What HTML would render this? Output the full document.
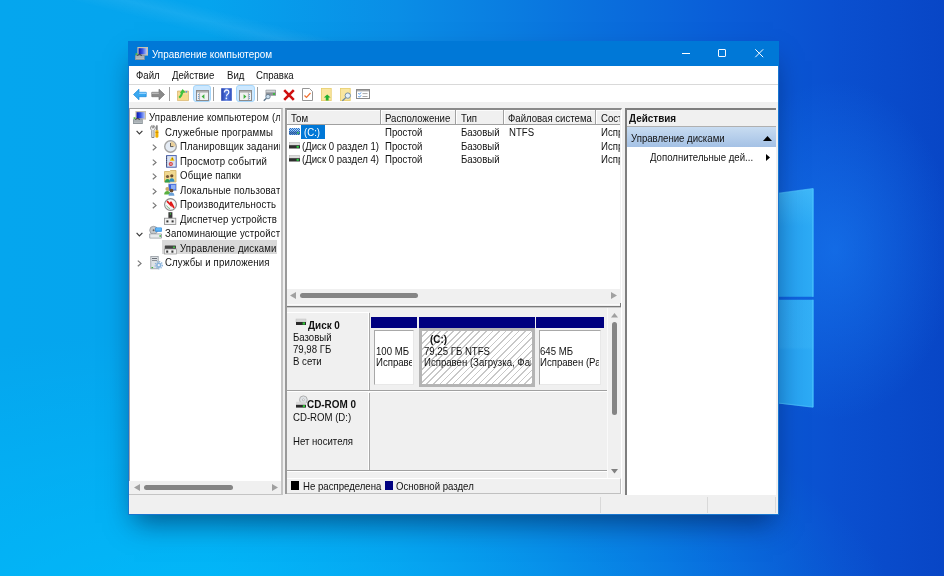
<!DOCTYPE html>
<html><head><meta charset="utf-8">
<style>
*{margin:0;padding:0;box-sizing:border-box}
html,body{width:944px;height:576px;overflow:hidden}
body{position:relative;font-family:"Liberation Sans",sans-serif;font-size:9.5px;line-height:12px;color:#1a1a1a;background:#0a78e2}
.a{position:absolute}
svg.a{overflow:visible}
.t{position:absolute;white-space:nowrap;line-height:12px}
.clip{position:absolute;overflow:hidden}
</style></head><body>

<div class="a" style="left:0;top:0;width:944px;height:576px;background:
 radial-gradient(ellipse 120px 170px at 835px 250px, rgba(30,140,255,.45), rgba(30,140,255,0)),
 radial-gradient(ellipse 680px 300px at 220px 630px, rgba(0,195,255,.7), rgba(0,195,255,0)),
 linear-gradient(90deg,#05a6ee 0%,#05a4ee 22%,#0a8ee6 42%,#0a74de 60%,#0a5ed8 76%,#0a50d0 88%,#0846c6 100%)"></div>
<div class="a" style="left:0;top:0;width:944px;height:576px;background:linear-gradient(194deg,rgba(255,255,255,0) 23.5%,rgba(255,255,255,.07) 25.2%,rgba(255,255,255,0) 27%);-webkit-mask-image:linear-gradient(90deg,#000 0px,#000 330px,transparent 480px)"></div>
<svg class="a" style="left:640px;top:180px;" width="180" height="240" viewBox="0 0 180 240"><defs><linearGradient id="lg1" x1="0" x2="1" y1="0" y2="0"><stop offset="0" stop-color="#1a8ae6"/><stop offset="0.78" stop-color="#229cee"/><stop offset="1" stop-color="#2eacf6"/></linearGradient>
<linearGradient id="lg2" x1="0" x2="0" y1="0" y2="1"><stop offset="0" stop-color="#60d0ff" stop-opacity=".35"/><stop offset=".35" stop-color="#60d0ff" stop-opacity="0"/></linearGradient>
<linearGradient id="lg3" x1="0" x2="0" y1="0" y2="1"><stop offset="0" stop-color="#000" stop-opacity="0"/><stop offset="0" stop-color="#60d0ff" stop-opacity=".12"/><stop offset=".44" stop-color="#60d0ff" stop-opacity=".12"/><stop offset=".47" stop-color="#60d0ff" stop-opacity="0"/><stop offset="1" stop-color="#60d0ff" stop-opacity="0"/></linearGradient></defs>
<polygon points="0,32.4 173.5,8.6 173.5,116.8 0,116.8" fill="url(#lg1)"/>
<polygon points="0,32.4 173.5,8.6 173.5,116.8 0,116.8" fill="url(#lg2)"/>
<polygon points="0,119.8 173.5,119.8 173.5,227.2 0,208.7" fill="url(#lg1)"/>
<polygon points="0,119.8 173.5,119.8 173.5,227.2 0,208.7" fill="url(#lg3)"/>
<path d="M138 13.4L173 8.6" stroke="#4cc0fc" stroke-width="1.2" opacity=".7"/>
<path d="M138 223L173 227.2" stroke="#4cc0fc" stroke-width="1.2" opacity=".7"/>
<rect x="172" y="8.6" width="1.6" height="108.2" fill="#48c0fc" opacity=".7"/>
<rect x="172" y="119.8" width="1.6" height="107.4" fill="#48c0fc" opacity=".7"/></svg>
<div class="a" style="left:128px;top:41px;width:651px;height:474px;background:#f0f0f0;box-shadow:0 14px 26px -6px rgba(0,20,60,.55);border:1px solid #1976cf;border-top:0"></div>
<div class="a" style="left:128px;top:41px;width:651px;height:25px;background:#0078d7;"></div>
<svg class="a" style="left:135px;top:47px;" width="13" height="13" viewBox="0 0 13 13"><defs><linearGradient id="scr0" x1="0" x2="1"><stop offset="0" stop-color="#0a18b0"/><stop offset=".45" stop-color="#3050e0"/><stop offset="1" stop-color="#b0c4ff"/></linearGradient></defs><rect x="2.4" y="0" width="10.6" height="8.6" fill="#cbc2ae"/><rect x="3.6" y="1.2" width="8.2" height="6.2" fill="url(#scr0)"/><rect x="0" y="8.2" width="9.8" height="4.8" fill="#8e979c"/><rect x="0.8" y="9.6" width="8.2" height="0.8" fill="#d4d9dc"/><rect x="0.8" y="11.2" width="8.2" height="0.8" fill="#c0c6ca"/><rect x="0.6" y="6.2" width="1.8" height="1.8" fill="#56c040"/><path d="M2.2 8.4q2.2-2 4.6 0" stroke="#2a2a2a" stroke-width="0.9" fill="none"/></svg>
<div class="t" style="left:152.30px;top:48.50px;font-size:10.39px;color:#fff;transform:scaleX(0.955);transform-origin:0 0;">Управление компьютером</div>
<div class="a" style="left:682px;top:53px;width:8px;height:1px;background:#fff;"></div>
<div class="a" style="left:718px;top:49px;width:8px;height:8px;border:1px solid #f4f8ff;border-radius:1px"></div>
<svg class="a" style="left:755px;top:49px;" width="9" height="9" viewBox="0 0 9 9"><path d="M0.3 0.3L8.2 8.2M8.2 0.3L0.3 8.2" stroke="#fff" stroke-width="1"/></svg>
<div class="a" style="left:129px;top:66px;width:649px;height:18px;background:#fff;"></div>
<div class="a" style="left:129px;top:84px;width:649px;height:1px;background:#d9d9d9;"></div>
<div class="t" style="left:136.30px;top:69.61px;font-size:10.07px;color:#111;transform:scaleX(0.955);transform-origin:0 0;">Файл</div>
<div class="t" style="left:172.30px;top:69.61px;font-size:10.07px;color:#111;transform:scaleX(0.955);transform-origin:0 0;">Действие</div>
<div class="t" style="left:227.30px;top:69.61px;font-size:10.07px;color:#111;transform:scaleX(0.955);transform-origin:0 0;">Вид</div>
<div class="t" style="left:256.30px;top:69.61px;font-size:10.07px;color:#111;transform:scaleX(0.955);transform-origin:0 0;">Справка</div>
<div class="a" style="left:129px;top:85px;width:649px;height:17px;background:#fff;"></div>
<div class="a" style="left:129px;top:108px;width:154px;height:387px;background:#fff;border-top:1px solid #a0a0a0;border-left:1px solid #a8a8a8;border-right:2px solid #c4c4c4;border-bottom:2px solid #c4c4c4"></div>
<div class="clip" style="left:129px;top:109px;width:151px;height:372px">
<div class="a" style="left:33px;top:131px;width:115px;height:14px;background:#d9d9d9;"></div>
<div class="t" style="left:20.30px;top:3.11px;font-size:10.07px;color:#111;transform:scaleX(0.955);transform-origin:0 0;letter-spacing:0.17px">Управление компьютером (локальным)</div>
<svg class="a" style="left:4px;top:1.5px;" width="13" height="13" viewBox="0 0 13 13"><defs><linearGradient id="scr" x1="0" x2="1"><stop offset="0" stop-color="#0a18b0"/><stop offset=".45" stop-color="#3050e0"/><stop offset="1" stop-color="#b0c4ff"/></linearGradient></defs><rect x="2.4" y="0" width="10.6" height="8.6" fill="#cbc2ae"/><rect x="3.6" y="1.2" width="8.2" height="6.2" fill="url(#scr)"/><rect x="0" y="8.2" width="9.8" height="4.8" fill="#8e979c"/><rect x="0.8" y="9.6" width="8.2" height="0.8" fill="#d4d9dc"/><rect x="0.8" y="11.2" width="8.2" height="0.8" fill="#c0c6ca"/><rect x="0.6" y="6.2" width="1.8" height="1.8" fill="#56c040"/><path d="M2.2 8.4q2.2-2 4.6 0" stroke="#2a2a2a" stroke-width="0.9" fill="none"/></svg>
<svg class="a" style="left:7px;top:21.0px;" width="7" height="5" viewBox="0 0 7 5"><path d="M0.6 0.8L3.4 3.8L6.4 0.8" fill="none" stroke="#3a3a3a" stroke-width="1.2"/></svg>
<div class="t" style="left:36.30px;top:17.61px;font-size:10.07px;color:#111;transform:scaleX(0.955);transform-origin:0 0;letter-spacing:0.17px">Служебные программы</div>
<svg class="a" style="left:21px;top:16px;" width="13" height="13" viewBox="0 0 13 13"><path d="M2.2 0.5a2.6 2.6 0 0 0-1 4.2l0.6 0.6v7.2h2.2V5.3l0.6-0.6a2.6 2.6 0 0 0-1-4.2v2.4h-1.4z" fill="#f4f4f4" stroke="#7a7a7a" stroke-width="0.9"/><rect x="6.3" y="0.3" width="1.2" height="5" fill="#555"/><path d="M5.4 5.2h3v6.5q0 1-1.5 1t-1.5-1z" fill="#f0b000"/><path d="M5.4 7.5h3" stroke="#c08000" stroke-width="0.7"/></svg>
<svg class="a" style="left:23.400000000000006px;top:35.30000000000001px;" width="5" height="7" viewBox="0 0 5 7"><path d="M0.8 0.6L4 3.4L0.8 6.2" fill="none" stroke="#7a7a7a" stroke-width="1.2"/></svg>
<div class="t" style="left:51.30px;top:32.11px;font-size:10.07px;color:#111;transform:scaleX(0.955);transform-origin:0 0;letter-spacing:0.17px">Планировщик заданий</div>
<svg class="a" style="left:35px;top:30.5px;" width="13" height="13" viewBox="0 0 13 13"><circle cx="6.5" cy="6.5" r="5.8" fill="#e4ebf4" stroke="#a4a4a4" stroke-width="1.4"/><path d="M6.5 1.4A5.1 5.1 0 0 1 11.6 6.5H6.5z" fill="#ead09a"/><path d="M6.5 3V6.6H9.4" fill="none" stroke="#3a3a3a" stroke-width="0.8"/></svg>
<svg class="a" style="left:23.400000000000006px;top:49.80000000000001px;" width="5" height="7" viewBox="0 0 5 7"><path d="M0.8 0.6L4 3.4L0.8 6.2" fill="none" stroke="#7a7a7a" stroke-width="1.2"/></svg>
<div class="t" style="left:51.30px;top:46.61px;font-size:10.07px;color:#111;transform:scaleX(0.955);transform-origin:0 0;letter-spacing:0.17px">Просмотр событий</div>
<svg class="a" style="left:35.5px;top:45.5px;" width="13" height="13" viewBox="0 0 13 13"><rect x="1.6" y="0.6" width="9.6" height="11.6" fill="#dfe8f6" stroke="#4a62b0" stroke-width="1"/><path d="M1.6 1.5v10" stroke="#333" stroke-width="0.9" stroke-dasharray="0.8 1"/><path d="M3.5 3h6M3.5 5h6M3.5 7h6M3.5 9h6" stroke="#b0bedc" stroke-width="0.5"/><path d="M7.2 1.6L9.6 5.8H4.8z" fill="#f2c200"/><rect x="6.9" y="3" width="0.7" height="1.6" fill="#6a5000"/><circle cx="5.8" cy="9" r="2.1" fill="#d43a3a"/><rect x="4.7" y="8.6" width="2.2" height="0.8" fill="#fff"/></svg>
<svg class="a" style="left:23.400000000000006px;top:64.30000000000001px;" width="5" height="7" viewBox="0 0 5 7"><path d="M0.8 0.6L4 3.4L0.8 6.2" fill="none" stroke="#7a7a7a" stroke-width="1.2"/></svg>
<div class="t" style="left:51.30px;top:61.11px;font-size:10.07px;color:#111;transform:scaleX(0.955);transform-origin:0 0;letter-spacing:0.17px">Общие папки</div>
<svg class="a" style="left:34.80000000000001px;top:60.5px;" width="13" height="13" viewBox="0 0 13 13"><path d="M0.5 1.5h5l1-1h5.5v11.5H0.5z" fill="#f0d890" stroke="#d0b060" stroke-width="0.8"/><circle cx="3.5" cy="6.5" r="1.6" fill="#7a5a3a"/><path d="M0.8 12.5q0-3.5 2.7-3.5t2.7 3.5z" fill="#30a050"/><circle cx="7.8" cy="5.8" r="1.6" fill="#6a4a2a"/><path d="M5.2 11.8q0-3.5 2.6-3.5t2.6 3.5z" fill="#3090c0"/></svg>
<svg class="a" style="left:23.400000000000006px;top:78.80000000000001px;" width="5" height="7" viewBox="0 0 5 7"><path d="M0.8 0.6L4 3.4L0.8 6.2" fill="none" stroke="#7a7a7a" stroke-width="1.2"/></svg>
<div class="t" style="left:51.30px;top:75.61px;font-size:10.07px;color:#111;transform:scaleX(0.955);transform-origin:0 0;letter-spacing:0.17px">Локальные пользователи и группы</div>
<svg class="a" style="left:34.80000000000001px;top:74px;" width="13" height="13" viewBox="0 0 13 13"><rect x="4" y="0.5" width="8.8" height="7.5" fill="#b8c0c8"/><rect x="4.8" y="1.2" width="7.2" height="6" fill="#3a62e0"/><rect x="7" y="2" width="4.5" height="4.5" fill="#8fb0f4"/><circle cx="3.3" cy="6" r="1.9" fill="#c8a868"/><path d="M0.2 11.5q0-3.6 3.1-3.6t3.1 3.6z" fill="#5ab040"/><circle cx="7.5" cy="7.6" r="1.9" fill="#6a4a2a"/><path d="M4.6 12.8q0-3.4 2.9-3.4t2.9 3.4z" fill="#6aa0d8"/></svg>
<svg class="a" style="left:23.400000000000006px;top:93.30000000000001px;" width="5" height="7" viewBox="0 0 5 7"><path d="M0.8 0.6L4 3.4L0.8 6.2" fill="none" stroke="#7a7a7a" stroke-width="1.2"/></svg>
<div class="t" style="left:51.30px;top:90.11px;font-size:10.07px;color:#111;transform:scaleX(0.955);transform-origin:0 0;letter-spacing:0.17px">Производительность</div>
<svg class="a" style="left:35px;top:88.5px;" width="13" height="13" viewBox="0 0 13 13"><circle cx="6.5" cy="6.5" r="5.9" fill="#f6f6f6" stroke="#8a8a8a" stroke-width="1.1"/><path d="M3 3.2L6.8 7.2L6.8 3.8L10 10" fill="none" stroke="#e01818" stroke-width="1.7"/><path d="M2.6 7.5q1 2.5 3.5 3.2" fill="none" stroke="#4aa060" stroke-width="0.7"/></svg>
<div class="t" style="left:51.30px;top:104.61px;font-size:10.07px;color:#111;transform:scaleX(0.955);transform-origin:0 0;letter-spacing:0.17px">Диспетчер устройств</div>
<svg class="a" style="left:35px;top:103.30000000000001px;" width="13" height="13" viewBox="0 0 13 13"><rect x="4.4" y="0.2" width="4" height="6.5" fill="#3a3a3a"/><rect x="5.8" y="1.2" width="1.2" height="1.4" fill="#40c040"/><rect x="0.4" y="6.2" width="11.4" height="6.2" fill="#f0f0f0" stroke="#888" stroke-width="0.8"/><rect x="2.4" y="8.4" width="2" height="2" fill="#333"/><rect x="7.6" y="8.4" width="2" height="2" fill="#333"/></svg>
<svg class="a" style="left:7px;top:122.5px;" width="7" height="5" viewBox="0 0 7 5"><path d="M0.6 0.8L3.4 3.8L6.4 0.8" fill="none" stroke="#3a3a3a" stroke-width="1.2"/></svg>
<div class="t" style="left:36.30px;top:119.11px;font-size:10.07px;color:#111;transform:scaleX(0.955);transform-origin:0 0;letter-spacing:0.17px">Запоминающие устройства</div>
<svg class="a" style="left:19.5px;top:117.30000000000001px;" width="13" height="13" viewBox="0 0 13 13"><circle cx="4.6" cy="4.2" r="3.9" fill="#c4c8cc" stroke="#8a8e92" stroke-width="0.7"/><circle cx="4.6" cy="4.2" r="1" fill="#666"/><rect x="6.2" y="1.4" width="6.6" height="4.4" fill="#2a88e0" rx="0.6"/><rect x="7" y="2.1" width="5" height="2.6" fill="#60b8f8"/><rect x="0.3" y="7.4" width="12.6" height="5.2" fill="#9aa0a6" rx="0.8"/><rect x="1.2" y="8.3" width="10.8" height="3.4" fill="#e8eaec"/><rect x="10.4" y="9.3" width="1.6" height="1.4" fill="#30b030"/></svg>
<div class="t" style="left:51.30px;top:133.61px;font-size:10.07px;color:#111;transform:scaleX(0.955);transform-origin:0 0;letter-spacing:0.17px">Управление дисками</div>
<svg class="a" style="left:35px;top:135.6px;" width="13" height="13" viewBox="0 0 13 13"><rect x="0.8" y="0.4" width="11.2" height="3.8" fill="#444" rx="0.6"/><rect x="9" y="1.6" width="2" height="1.3" fill="#40d040"/><rect x="0.3" y="4" width="12.2" height="5" fill="#f2f2f2" stroke="#909090" stroke-width="0.7"/><rect x="2.2" y="5.5" width="2" height="2.2" fill="#3a3a3a"/><rect x="7.4" y="5.5" width="2" height="2.2" fill="#3a3a3a"/></svg>
<svg class="a" style="left:8px;top:151.3px;" width="5" height="7" viewBox="0 0 5 7"><path d="M0.8 0.6L4 3.4L0.8 6.2" fill="none" stroke="#7a7a7a" stroke-width="1.2"/></svg>
<div class="t" style="left:36.30px;top:148.11px;font-size:10.07px;color:#111;transform:scaleX(0.955);transform-origin:0 0;letter-spacing:0.17px">Службы и приложения</div>
<svg class="a" style="left:21px;top:146.8px;" width="13" height="13" viewBox="0 0 13 13"><rect x="0.8" y="0.4" width="7.4" height="12.4" fill="#dde1e5" stroke="#959ba2" stroke-width="0.8"/><rect x="2" y="2" width="5" height="1" fill="#6a7078"/><rect x="2" y="4" width="5" height="1" fill="#8a9098"/><circle cx="8.8" cy="9.2" r="2.7" fill="#8cb4dc"/><circle cx="8.8" cy="9.2" r="3.6" fill="none" stroke="#8cb4dc" stroke-width="1.3" stroke-dasharray="1.2 1.2"/><circle cx="8.8" cy="9.2" r="1.1" fill="#eef4fa"/><rect x="1.5" y="11" width="1.6" height="1.2" fill="#40b040"/></svg>
</div>
<div class="a" style="left:129px;top:481px;width:152px;height:13px;background:#f0f0f0;"></div>
<svg class="a" style="left:134px;top:484px;" width="6" height="7" viewBox="0 0 6 7"><path d="M6 0L0 3.5L6 7z" fill="#a0a0a0"/></svg>
<svg class="a" style="left:272px;top:484px;" width="6" height="7" viewBox="0 0 6 7"><path d="M0 0L6 3.5L0 7z" fill="#a0a0a0"/></svg>
<div class="a" style="left:144px;top:485px;width:89px;height:5px;background:#858585;border-radius:3px"></div>
<div class="a" style="left:193px;top:85px;width:18px;height:17px;background:#cce8ff;border:1px solid #a6d6fb;border-radius:3px"></div>
<div class="a" style="left:236px;top:85px;width:19px;height:17px;background:#cce8ff;border:1px solid #a6d6fb;border-radius:3px"></div>
<div class="a" style="left:169px;top:87px;width:1px;height:14px;background:#a0a0a0;"></div>
<div class="a" style="left:213px;top:87px;width:1px;height:14px;background:#a0a0a0;"></div>
<div class="a" style="left:257px;top:87px;width:1px;height:14px;background:#a0a0a0;"></div>
<svg class="a" style="left:133px;top:88px;" width="14" height="13" viewBox="0 0 14 13"><path d="M0.5 6.5L6 1.2V4.3H13.2V8.7H6V11.8z" fill="#3aa8f0" stroke="#1a86d8" stroke-width="0.7"/><path d="M6.2 4.6H13V6H6.2z" fill="#8fd0ff"/></svg>
<svg class="a" style="left:151px;top:88px;" width="14" height="13" viewBox="0 0 14 13"><path d="M13.5 6.5L8 1.2V4.3H0.8V8.7H8V11.8z" fill="#8a8a8a" stroke="#707070" stroke-width="0.7"/><path d="M1 4.6H7.8V6H1z" fill="#b8b8b8"/></svg>
<svg class="a" style="left:177px;top:88px;" width="12" height="13" viewBox="0 0 12 13"><defs><linearGradient id="fg" x1="0" x2="0" y1="0" y2="1"><stop offset="0" stop-color="#f4d690"/><stop offset="1" stop-color="#f8dc88"/></linearGradient></defs><path d="M0.5 3h11v9.6H0.5z" fill="url(#fg)" stroke="#d4b068" stroke-width="0.7"/><path d="M0.8 5.8h10.4" stroke="#fbe6a8" stroke-width="0.6"/><path d="M2.2 9.8Q4.6 7.4 5.3 4.4" stroke="#3cc03c" stroke-width="2.1" fill="none"/><path d="M2.8 5.2L5.6 0.9L8.6 4.6z" fill="#3cc03c"/><circle cx="9.4" cy="3.8" r="0.9" fill="#5a9ad8"/></svg>
<svg class="a" style="left:196px;top:90px;" width="13" height="11" viewBox="0 0 13 11"><rect x="0.5" y="0.5" width="12" height="10" fill="#f2f2f2" stroke="#8c8c8c" stroke-width="1"/><rect x="1" y="1" width="11" height="1.6" fill="#b0b0b0"/><path d="M3.6 2.6v7.8" stroke="#9a9a9a" stroke-width="0.8"/><path d="M2 4.6h1M2 6.6h1M2 8.4h1" stroke="#5a90d0" stroke-width="0.9"/><path d="M8.4 4.2L5.6 6.6L8.4 9z" fill="#3cb03c"/></svg>
<svg class="a" style="left:221px;top:88px;" width="11" height="13" viewBox="0 0 11 13"><defs><linearGradient id="hg" x1="0" x2="1"><stop offset="0" stop-color="#2440b0"/><stop offset=".5" stop-color="#5478dc"/><stop offset="1" stop-color="#3050c0"/></linearGradient></defs><rect x="0.2" y="0.2" width="10.6" height="12.6" fill="url(#hg)"/><path d="M3.4 4.4q0-2.4 2.2-2.4t2.2 2.2q0 1.4-1.2 2.1t-1 2" stroke="#f0f4ff" stroke-width="1.3" fill="none"/><rect x="4.6" y="9.6" width="1.5" height="1.6" fill="#f0f4ff"/></svg>
<svg class="a" style="left:239px;top:90px;" width="13" height="11" viewBox="0 0 13 11"><rect x="0.5" y="0.5" width="12" height="10" fill="#f2f2f2" stroke="#8c8c8c" stroke-width="1"/><rect x="1" y="1" width="11" height="1.6" fill="#b0b0b0"/><path d="M9.4 2.6v7.8" stroke="#9a9a9a" stroke-width="0.8"/><path d="M10 4.6h1M10 6.6h1M10 8.4h1" stroke="#5a90d0" stroke-width="0.9"/><path d="M4.6 4.2L7.4 6.6L4.6 9z" fill="#3cb03c"/></svg>
<svg class="a" style="left:263px;top:89px;" width="14" height="13" viewBox="0 0 14 13"><rect x="2.6" y="0.8" width="10.4" height="6" fill="#8c9096" rx="0.6"/><rect x="3.2" y="1.4" width="9.2" height="2" fill="#cfd3d6"/><rect x="10" y="4.2" width="2" height="1.6" fill="#30c030"/><circle cx="5" cy="7.6" r="2.2" fill="#c8dcec" stroke="#5a7288" stroke-width="0.8"/><path d="M3.4 9.2L0.8 11.8" stroke="#5a7288" stroke-width="1.3"/></svg>
<svg class="a" style="left:283px;top:89px;" width="12" height="12" viewBox="0 0 12 12"><path d="M1.2 1.2L10.8 10.8M10.8 1.2L1.2 10.8" stroke="#d01010" stroke-width="2.6"/></svg>
<svg class="a" style="left:302px;top:88px;" width="11" height="13" viewBox="0 0 11 13"><path d="M0.5 0.5h7l3 3v9h-10z" fill="#fff" stroke="#8a8a8a" stroke-width="0.9"/><path d="M2.5 7.5l2 2 4-4.5" stroke="#f07030" stroke-width="1.2" fill="none"/></svg>
<svg class="a" style="left:321px;top:88px;" width="11" height="13" viewBox="0 0 11 13"><rect x="0.4" y="0.4" width="9.8" height="12.2" fill="#f9e6a0" stroke="#e8cc68" stroke-width="0.8"/><path d="M6.2 6.4L9.6 9.4H7.6V12.6H4.8V9.4H2.8z" fill="#22b030"/></svg>
<svg class="a" style="left:340px;top:88px;" width="12" height="13" viewBox="0 0 12 13"><rect x="0.4" y="0.4" width="9.8" height="12.2" fill="#f9e6a0" stroke="#e8cc68" stroke-width="0.8"/><circle cx="7.8" cy="7.6" r="2.7" fill="#e4f0fa" stroke="#6a86a0" stroke-width="0.9"/><path d="M5.8 9.6L2.4 12.8" stroke="#6a86a0" stroke-width="1.3"/></svg>
<svg class="a" style="left:356px;top:89px;" width="14" height="10" viewBox="0 0 14 10"><rect x="0.5" y="0.5" width="13" height="9" fill="#fff" stroke="#8a8a8a" stroke-width="1"/><rect x="1" y="1" width="12" height="1.4" fill="#a8a8a8"/><path d="M2.4 4.3l1 1 1.6-1.8M2.4 7.2l1 1 1.6-1.8" stroke="#2a80e0" stroke-width="0.9" fill="none"/><path d="M6.5 4.6h5M6.5 7.5h5" stroke="#a0a0a0" stroke-width="0.9"/></svg>
<div class="a" style="left:285px;top:108px;width:337px;height:386px;background:#f0f0f0;border-top:2px solid #8a8a8a;border-left:2px solid #9a9a9a;border-right:1px solid #fff"></div>
<div class="a" style="left:287px;top:110px;width:333px;height:179px;background:#fff;"></div>
<div class="a" style="left:287px;top:110px;width:333px;height:15px;background:#f0f0f0;border-bottom:1px solid #a0a0a0"></div>
<div class="a" style="left:287px;top:110px;width:333px;height:1px;background:#fcfcfc;"></div>
<div class="a" style="left:287px;top:110px;width:1px;height:14px;background:#fcfcfc;"></div>
<div class="a" style="left:380px;top:110px;width:1px;height:14px;background:#a0a0a0;"></div>
<div class="a" style="left:381px;top:110px;width:1px;height:14px;background:#fff;"></div>
<div class="a" style="left:455px;top:110px;width:1px;height:14px;background:#a0a0a0;"></div>
<div class="a" style="left:456px;top:110px;width:1px;height:14px;background:#fff;"></div>
<div class="a" style="left:503px;top:110px;width:1px;height:14px;background:#a0a0a0;"></div>
<div class="a" style="left:504px;top:110px;width:1px;height:14px;background:#fff;"></div>
<div class="a" style="left:595px;top:110px;width:1px;height:14px;background:#a0a0a0;"></div>
<div class="a" style="left:596px;top:110px;width:1px;height:14px;background:#fff;"></div>
<div class="t" style="left:291.30px;top:112.61px;font-size:10.07px;color:#111;transform:scaleX(0.955);transform-origin:0 0;">Том</div>
<div class="t" style="left:385.30px;top:112.61px;font-size:10.07px;color:#111;transform:scaleX(0.955);transform-origin:0 0;">Расположение</div>
<div class="t" style="left:461.30px;top:112.61px;font-size:10.07px;color:#111;transform:scaleX(0.955);transform-origin:0 0;">Тип</div>
<div class="t" style="left:508.30px;top:112.61px;font-size:10.07px;color:#111;transform:scaleX(0.955);transform-origin:0 0;">Файловая система</div>
<div class="clip" style="left:287px;top:124px;width:333px;height:160px">
<div class="t" style="left:313.30px;top:-11.39px;font-size:10.07px;color:#111;transform:scaleX(0.955);transform-origin:0 0;"></div>
<div class="a" style="left:14px;top:1px;width:24px;height:14px;background:#0078d7;"></div>
<div class="t" style="left:16.80px;top:3.11px;font-size:10.07px;color:#fff;transform:scaleX(0.955);transform-origin:0 0;">(C:)</div>
<svg class="a" style="left:2px;top:4px;" width="11" height="7" viewBox="0 0 11 7"><defs><pattern id="hp" width="2" height="2" patternUnits="userSpaceOnUse"><rect width="2" height="2" fill="#2a70c8"/><rect width="1" height="1" fill="#a8d0f8"/><rect x="1" y="1" width="1" height="1" fill="#a8d0f8"/></pattern></defs><rect x="0" y="0" width="11" height="7" fill="url(#hp)"/><rect x="0" y="3.5" width="11" height="3" fill="#1a4a90" opacity=".6"/><rect x="8" y="4.2" width="2" height="1.4" fill="#30c060"/></svg>
<svg class="a" style="left:2px;top:17.599999999999994px;" width="11" height="7" viewBox="0 0 11 7"><rect x="0.3" y="0.3" width="10.4" height="3.2" fill="#dcdcdc" stroke="#b0b0b0" stroke-width="0.5"/><rect x="0" y="3.2" width="11" height="3.3" fill="#2e2e2e"/><rect x="7.6" y="3.9" width="2.2" height="1.9" fill="#28d040"/></svg>
<svg class="a" style="left:2px;top:31.30000000000001px;" width="11" height="7" viewBox="0 0 11 7"><rect x="0.3" y="0.3" width="10.4" height="3.2" fill="#dcdcdc" stroke="#b0b0b0" stroke-width="0.5"/><rect x="0" y="3.2" width="11" height="3.3" fill="#2e2e2e"/><rect x="7.6" y="3.9" width="2.2" height="1.9" fill="#28d040"/></svg>
<div class="t" style="left:14.80px;top:16.61px;font-size:10.07px;color:#111;transform:scaleX(0.955);transform-origin:0 0;">(Диск 0 раздел 1)</div>
<div class="t" style="left:14.80px;top:30.31px;font-size:10.07px;color:#111;transform:scaleX(0.955);transform-origin:0 0;">(Диск 0 раздел 4)</div>
<div class="t" style="left:98.30px;top:3.11px;font-size:10.07px;color:#111;transform:scaleX(0.955);transform-origin:0 0;">Простой</div>
<div class="t" style="left:174.30px;top:3.11px;font-size:10.07px;color:#111;transform:scaleX(0.955);transform-origin:0 0;">Базовый</div>
<div class="t" style="left:313.80px;top:3.11px;font-size:10.07px;color:#111;transform:scaleX(0.955);transform-origin:0 0;">Исправен</div>
<div class="t" style="left:98.30px;top:16.61px;font-size:10.07px;color:#111;transform:scaleX(0.955);transform-origin:0 0;">Простой</div>
<div class="t" style="left:174.30px;top:16.61px;font-size:10.07px;color:#111;transform:scaleX(0.955);transform-origin:0 0;">Базовый</div>
<div class="t" style="left:313.80px;top:16.61px;font-size:10.07px;color:#111;transform:scaleX(0.955);transform-origin:0 0;">Исправен</div>
<div class="t" style="left:98.30px;top:30.31px;font-size:10.07px;color:#111;transform:scaleX(0.955);transform-origin:0 0;">Простой</div>
<div class="t" style="left:174.30px;top:30.31px;font-size:10.07px;color:#111;transform:scaleX(0.955);transform-origin:0 0;">Базовый</div>
<div class="t" style="left:313.80px;top:30.31px;font-size:10.07px;color:#111;transform:scaleX(0.955);transform-origin:0 0;">Исправен</div>
<div class="t" style="left:221.80px;top:3.11px;font-size:10.07px;color:#111;transform:scaleX(0.955);transform-origin:0 0;">NTFS</div>
</div>
<div class="clip" style="left:597px;top:110px;width:23px;height:13px">
<div class="t" style="left:3.80px;top:2.61px;font-size:10.07px;color:#111;transform:scaleX(0.955);transform-origin:0 0;">Состояние</div>
</div>
<div class="a" style="left:287px;top:289px;width:333px;height:17px;background:#f0f0f0;"></div>
<svg class="a" style="left:290px;top:292px;" width="6" height="7" viewBox="0 0 6 7"><path d="M6 0L0 3.5L6 7z" fill="#a0a0a0"/></svg>
<svg class="a" style="left:611px;top:292px;" width="6" height="7" viewBox="0 0 6 7"><path d="M0 0L6 3.5L0 7z" fill="#a0a0a0"/></svg>
<div class="a" style="left:300px;top:293px;width:118px;height:5px;background:#858585;border-radius:3px"></div>
<div class="a" style="left:287px;top:304px;width:333px;height:1px;background:#fafafa;"></div>
<div class="a" style="left:287px;top:306px;width:334px;height:1px;background:#7a7a7a;"></div>
<div class="a" style="left:620px;top:303px;width:1px;height:4px;background:#7a7a7a;"></div>
<div class="a" style="left:287px;top:307px;width:334px;height:1px;background:#c8c8c8;"></div>
<div class="a" style="left:287px;top:308px;width:320px;height:170px;background:#f0f0f0;"></div>
<div class="a" style="left:287px;top:312px;width:82px;height:78px;background:#f0f0f0;border-top:1px solid #fff;border-right:1px solid #fff"></div>
<div class="a" style="left:369px;top:313px;width:1px;height:77px;background:#a8a8a8;"></div>
<div class="a" style="left:287px;top:390px;width:320px;height:1px;background:#a0a0a0;"></div>
<div class="a" style="left:287px;top:391px;width:320px;height:1px;background:#fff;"></div>
<svg class="a" style="left:295px;top:318px;" width="12" height="8" viewBox="0 0 12 8"><rect x="1" y="1" width="10" height="3" fill="#d8d8d8" stroke="#c0c0c0" stroke-width="0.5"/><rect x="1" y="4" width="10" height="3" fill="#2a2a2a"/><rect x="7.6" y="4.4" width="2.4" height="2.2" fill="#30c838"/></svg>
<div class="t" style="left:307.60px;top:319.50px;font-size:10.39px;font-weight:bold;color:#111;transform:scaleX(0.955);transform-origin:0 0;">Диск 0</div>
<div class="t" style="left:293.30px;top:331.91px;font-size:10.07px;color:#111;transform:scaleX(0.955);transform-origin:0 0;">Базовый</div>
<div class="t" style="left:293.30px;top:343.91px;font-size:10.07px;color:#111;transform:scaleX(0.955);transform-origin:0 0;">79,98 ГБ</div>
<div class="t" style="left:293.30px;top:355.91px;font-size:10.07px;color:#111;transform:scaleX(0.955);transform-origin:0 0;">В сети</div>
<div class="a" style="left:371px;top:317px;width:46px;height:11px;background:#000080;"></div>
<div class="a" style="left:371px;top:328px;width:46px;height:59px;background:#f0f0f0;"></div>
<div class="a" style="left:374px;top:330px;width:40px;height:55px;background:#fff;border:1px solid #a8a8a8;border-right-color:#e8e8e8;border-bottom-color:#e8e8e8"></div>
<div class="a" style="left:419px;top:317px;width:116px;height:11px;background:#000080;"></div>
<div class="a" style="left:419px;top:328px;width:116px;height:59px;background:#f0f0f0;"></div>
<div class="a" style="left:419px;top:328px;width:116px;height:59px;border:3px solid #b4b4b4;background:#fff repeating-linear-gradient(135deg,#fff 0px,#fff 3.5px,#c8c8c8 3.5px,#c8c8c8 4.6px)"></div>
<div class="a" style="left:536px;top:317px;width:68px;height:11px;background:#000080;"></div>
<div class="a" style="left:536px;top:328px;width:68px;height:59px;background:#f0f0f0;"></div>
<div class="a" style="left:539px;top:330px;width:62px;height:55px;background:#fff;border:1px solid #a8a8a8;border-right-color:#e8e8e8;border-bottom-color:#e8e8e8"></div>
<div class="clip" style="left:374px;top:331px;width:38px;height:52px">
<div class="t" style="left:2.30px;top:14.61px;font-size:10.07px;color:#111;transform:scaleX(0.955);transform-origin:0 0;">100 МБ</div>
<div class="t" style="left:2.30px;top:26.11px;font-size:10.07px;color:#111;transform:scaleX(0.955);transform-origin:0 0;">Исправен</div>
</div>
<div class="clip" style="left:422px;top:331px;width:109px;height:52px">
<div class="t" style="left:7.80px;top:2.70px;font-size:10.39px;font-weight:bold;color:#111;transform:scaleX(0.955);transform-origin:0 0;">(C:)</div>
<div class="t" style="left:1.90px;top:14.61px;font-size:10.07px;color:#111;transform:scaleX(0.955);transform-origin:0 0;">79,25 ГБ NTFS</div>
<div class="t" style="left:1.90px;top:26.11px;font-size:10.07px;color:#111;transform:scaleX(0.955);transform-origin:0 0;">Исправен (Загрузка, Файл подкачки)</div>
</div>
<div class="clip" style="left:540px;top:331px;width:59px;height:52px">
<div class="t" style="left:0.30px;top:14.61px;font-size:10.07px;color:#111;transform:scaleX(0.955);transform-origin:0 0;">645 МБ</div>
<div class="t" style="left:0.30px;top:26.11px;font-size:10.07px;color:#111;transform:scaleX(0.955);transform-origin:0 0;">Исправен (Раздел восстановления)</div>
</div>
<div class="a" style="left:287px;top:392px;width:82px;height:79px;background:#f0f0f0;border-right:1px solid #fff"></div>
<div class="a" style="left:369px;top:393px;width:1px;height:77px;background:#a8a8a8;"></div>
<svg class="a" style="left:295px;top:394px;" width="12" height="14" viewBox="0 0 12 14"><circle cx="8.4" cy="5.8" r="3.9" fill="#dfe3e6" stroke="#a8a8a8" stroke-width="0.9"/><circle cx="8.4" cy="5.8" r="1" fill="#fff" stroke="#909090" stroke-width="0.5"/><rect x="1" y="7.8" width="10" height="3" fill="#d8d8d8" opacity=".9"/><rect x="1" y="10.8" width="10" height="2.8" fill="#2a2a2a"/><rect x="7.8" y="11.1" width="2.2" height="2.2" fill="#30c838"/></svg>
<div class="t" style="left:307.30px;top:399.30px;font-size:10.39px;font-weight:bold;color:#111;transform:scaleX(0.955);transform-origin:0 0;">CD-ROM 0</div>
<div class="t" style="left:293.30px;top:411.91px;font-size:10.07px;color:#111;transform:scaleX(0.955);transform-origin:0 0;">CD-ROM (D:)</div>
<div class="t" style="left:293.30px;top:435.81px;font-size:10.07px;color:#111;transform:scaleX(0.955);transform-origin:0 0;">Нет носителя</div>
<div class="a" style="left:287px;top:470px;width:320px;height:1px;background:#a0a0a0;"></div>
<div class="a" style="left:287px;top:471px;width:320px;height:1px;background:#fff;"></div>
<div class="a" style="left:607px;top:308px;width:13px;height:170px;background:#f0f0f0;"></div>
<svg class="a" style="left:611px;top:313px;" width="7" height="4.5" viewBox="0 0 7 4.5"><path d="M0 4.5L3.5 0L7 4.5z" fill="#a0a0a0"/></svg>
<div class="a" style="left:612px;top:322px;width:5px;height:93px;background:#858585;border-radius:3px"></div>
<svg class="a" style="left:611px;top:469px;" width="7" height="4.5" viewBox="0 0 7 4.5"><path d="M0 0L3.5 4.5L7 0z" fill="#808080"/></svg>
<div class="a" style="left:287px;top:478px;width:334px;height:16px;background:#f0f0f0;border-top:1px solid #fff;border-right:1px solid #c0c0c0;border-bottom:1px solid #c0c0c0"></div>
<div class="a" style="left:291px;top:481px;width:8px;height:9px;background:#000;"></div>
<div class="t" style="left:303.30px;top:480.91px;font-size:10.07px;color:#111;transform:scaleX(0.955);transform-origin:0 0;">Не распределена</div>
<div class="a" style="left:385px;top:481px;width:8px;height:9px;background:#000080;"></div>
<div class="t" style="left:396.30px;top:480.91px;font-size:10.07px;color:#111;transform:scaleX(0.955);transform-origin:0 0;">Основной раздел</div>
<div class="a" style="left:625px;top:108px;width:151px;height:387px;background:#fff;border-top:2px solid #7e7e7e;border-left:2px solid #7e7e7e"></div>
<div class="a" style="left:627px;top:110px;width:149px;height:17px;background:#f0f0f0;border-bottom:1px solid #b0b0b0"></div>
<div class="t" style="left:629.30px;top:112.50px;font-size:10.39px;font-weight:bold;color:#111;transform:scaleX(0.955);transform-origin:0 0;">Действия</div>
<div class="a" style="left:627px;top:127px;width:149px;height:20px;background:linear-gradient(#c8dcf1,#a4c1e5);"></div>
<div class="t" style="left:630.70px;top:132.61px;font-size:10.07px;color:#111;transform:scaleX(0.955);transform-origin:0 0;">Управление дисками</div>
<svg class="a" style="left:762.5px;top:135.5px;" width="9" height="5" viewBox="0 0 9 5"><path d="M0 5L4.5 0L9 5z" fill="#000"/></svg>
<div class="t" style="left:650.30px;top:152.31px;font-size:10.07px;color:#111;transform:scaleX(0.955);transform-origin:0 0;">Дополнительные дей...</div>
<svg class="a" style="left:765.5px;top:154px;" width="4" height="7" viewBox="0 0 4 7"><path d="M0 0L4 3.5L0 7z" fill="#000"/></svg>
<div class="a" style="left:600px;top:497px;width:1px;height:16px;background:#d9d9d9;"></div>
<div class="a" style="left:707px;top:497px;width:1px;height:16px;background:#d9d9d9;"></div>
<div class="a" style="left:775px;top:497px;width:1px;height:16px;background:#d9d9d9;"></div>
<div class="a" style="left:607px;top:308px;width:1px;height:170px;background:#fafafa;"></div>
</body></html>
